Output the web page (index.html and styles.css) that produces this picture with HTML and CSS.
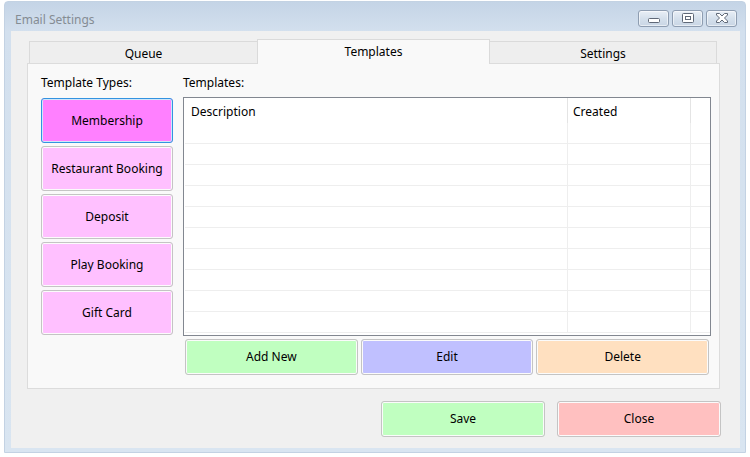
FILE: index.html
```html
<!DOCTYPE html>
<html>
<head>
<meta charset="utf-8">
<link rel="stylesheet" href="styles.css">
</head>
<body>
<div class="window">
  <div class="titlebar">
    <span class="title">Email Settings</span>
    <div class="caption-btns">
      <div class="cap-btn">
        <svg width="29" height="15" viewBox="0 0 29 15"><rect x="9.5" y="7.5" width="11" height="4" rx="1" fill="#fff" stroke="#5f6877"/></svg>
      </div>
      <div class="cap-btn">
        <svg width="29" height="15" viewBox="0 0 29 15"><rect x="9.5" y="2.5" width="11" height="9" rx="1" fill="#fff" stroke="#5f6877"/><rect x="12.5" y="5.5" width="5" height="3" fill="#fff" stroke="#5f6877"/></svg>
      </div>
      <div class="cap-btn">
        <svg width="29" height="15" viewBox="0 0 29 15"><path d="M9.5 2.5h3l2.5 2.5 2.5-2.5h3v1.5l-3 3 3 3v1.5h-3l-2.5-2.5-2.5 2.5h-3v-1.5l3-3-3-3z" fill="#fff" stroke="#5f6877" stroke-linejoin="round"/></svg>
      </div>
    </div>
  </div>
  <div class="client">
    <div class="tabctl">
      <div class="tabs">
        <div class="tab tab-queue">Queue</div>
        <div class="tab tab-active">Templates</div>
        <div class="tab tab-settings">Settings</div>
      </div>
      <div class="panel">
        <div class="col-types">
          <div class="label">Template Types:</div>
          <div class="type-list">
            <div class="btn type-btn type-selected">Membership</div>
            <div class="btn type-btn">Restaurant Booking</div>
            <div class="btn type-btn">Deposit</div>
            <div class="btn type-btn">Play Booking</div>
            <div class="btn type-btn">Gift Card</div>
          </div>
        </div>
        <div class="col-templates">
          <div class="label label-templates">Templates:</div>
          <div class="grid">
            <div class="grid-row grid-head">
              <div class="cell c-desc">Description</div>
              <div class="cell c-created">Created</div>
              <div class="cell c-fill"></div>
            </div>
            <div class="grid-row"><div class="cell c-desc"></div><div class="cell c-created"></div><div class="cell c-fill"></div></div>
            <div class="grid-row"><div class="cell c-desc"></div><div class="cell c-created"></div><div class="cell c-fill"></div></div>
            <div class="grid-row"><div class="cell c-desc"></div><div class="cell c-created"></div><div class="cell c-fill"></div></div>
            <div class="grid-row"><div class="cell c-desc"></div><div class="cell c-created"></div><div class="cell c-fill"></div></div>
            <div class="grid-row"><div class="cell c-desc"></div><div class="cell c-created"></div><div class="cell c-fill"></div></div>
            <div class="grid-row"><div class="cell c-desc"></div><div class="cell c-created"></div><div class="cell c-fill"></div></div>
            <div class="grid-row"><div class="cell c-desc"></div><div class="cell c-created"></div><div class="cell c-fill"></div></div>
            <div class="grid-row"><div class="cell c-desc"></div><div class="cell c-created"></div><div class="cell c-fill"></div></div>
            <div class="grid-row"><div class="cell c-desc"></div><div class="cell c-created"></div><div class="cell c-fill"></div></div>
            <div class="grid-row"><div class="cell c-desc"></div><div class="cell c-created"></div><div class="cell c-fill"></div></div>
          </div>
          <div class="actions">
            <div class="btn act-btn btn-green">Add New</div>
            <div class="btn act-btn btn-blue">Edit</div>
            <div class="btn act-btn btn-orange">Delete</div>
          </div>
        </div>
      </div>
    </div>
    <div class="footer">
      <div class="btn foot-btn btn-green">Save</div>
      <div class="btn foot-btn btn-red">Close</div>
    </div>
  </div>
</div>
</body>
</html>
```

FILE: styles.css
```css
* { box-sizing: border-box; }

html, body {
  margin: 0;
  padding: 0;
  background: #ffffff;
  width: 750px;
  height: 457px;
  overflow: hidden;
  font-family: "Noto Sans", "Open Sans", sans-serif;
  font-size: 12px;
  color: #000;
}

.window {
  margin: 1px 0 0 4px;
  width: 742px;
  height: 452px;
  border: 1px solid #c3d2e3;
  border-radius: 4px 4px 0 0;
  padding: 0 5px 4px 6px;
  background: linear-gradient(#c4d4e6, #d3e0ee 30px, #d9e5f1);
  display: flex;
  flex-direction: column;
}

.titlebar {
  height: 29px;
  display: flex;
  align-items: flex-start;
  justify-content: space-between;
  flex: none;
}

.title {
  padding: 10px 0 0 4px;
  line-height: 16px;
  color: #858c94;
  font-size: 12px;
}

.caption-btns {
  display: flex;
  gap: 3px;
  margin: 8px 3px 0 0;
}

.cap-btn {
  width: 31px;
  height: 17px;
  border: 1px solid #8e9db1;
  border-radius: 3px;
  background: linear-gradient(#e9eff6, #d5e0ec 50%, #c9d6e5);
  box-shadow: inset 0 0 0 1px rgba(255,255,255,0.55);
  display: flex;
  align-items: center;
  justify-content: center;
}

.cap-btn svg { display: block; }

.client {
  flex: 1;
  background: #f0f0f0;
  padding: 8px 19px 0 16px;
  display: flex;
  flex-direction: column;
}

.tabctl {
  display: flex;
  flex-direction: column;
  margin-right: 1px;
}

.tabs {
  display: flex;
  align-items: flex-end;
  height: 24px;
  padding-left: 2px;
  position: relative;
  z-index: 1;
}

.tab {
  height: 22px;
  border: 1px solid #dadada;
  border-bottom: none;
  background: #eeeeee;
  text-align: center;
  line-height: 20px;
  padding-top: 2px;
}

.tab-queue { width: 228px; border-right: none; }
.tab-settings { width: 227px; border-left: none; }

.tab-active {
  width: 233px;
  height: 25px;
  margin-bottom: -1px;
  background: #f9f9f9;
  line-height: 22px;
  padding-top: 1px;
}

.panel {
  height: 326px;
  border: 1px solid #dcdcdc;
  background: #f9f9f9;
  display: flex;
  gap: 10px;
  padding: 10px 8px 0 13px;
}

.label {
  line-height: 16px;
  height: 16px;
  padding-top: 1px;
  color: #000;
}

.col-types { width: 132px; }

.type-list {
  margin-top: 8px;
  display: flex;
  flex-direction: column;
  gap: 3px;
}

.btn {
  border: 1px solid #c4c4c4;
  border-radius: 3px;
  box-shadow: inset 0 0 0 1px #fbfbfb;
  display: flex;
  align-items: center;
  justify-content: center;
  text-align: center;
  white-space: nowrap;
}

.type-btn {
  height: 45px;
  background: #ffc0ff;
}

.type-selected {
  background: #ff80ff;
  border-color: #3393e0;
  box-shadow: inset 0 0 0 1px #cfe6fa;
}

.col-templates {
  width: 528px;
  display: flex;
  flex-direction: column;
}

.label-templates { margin-bottom: 7px; }

.grid {
  height: 239px;
  border: 1px solid #828790;
  background: #ffffff;
}

.grid-row {
  display: flex;
  height: 21px;
  border-bottom: 1px solid #eeeeee;
  margin-left: 1px;
}

.grid-head {
  height: 25px;
  border-bottom: none;
  margin-left: 0;
}

.cell { height: 100%; }

.c-desc { width: 383px; border-right: 1px solid #eeeeee; }
.grid-head .c-desc { width: 384px; }
.c-created { width: 123px; border-right: 1px solid #eeeeee; }
.c-fill { flex: 1; }

.grid-head .cell {
  padding: 6px 0 0 7px;
  line-height: 16px;
  border-right-color: #e4e4e4;
}

.grid-head .c-created { padding-left: 5px; }

.actions {
  display: flex;
  gap: 3px;
  margin-top: 3px;
  padding: 0 2px;
}

.act-btn {
  flex: 1;
  height: 36px;
  padding-bottom: 2px;
}

.btn-green { background: #c0ffc0; }
.btn-blue { background: #c0c0ff; }
.btn-orange { background: #ffe0c0; }
.btn-red { background: #ffc0c0; }

.footer {
  display: flex;
  justify-content: flex-end;
  gap: 12px;
  margin-top: 12px;
}

.foot-btn {
  width: 164px;
  height: 36px;
  padding-bottom: 2px;
}
```
